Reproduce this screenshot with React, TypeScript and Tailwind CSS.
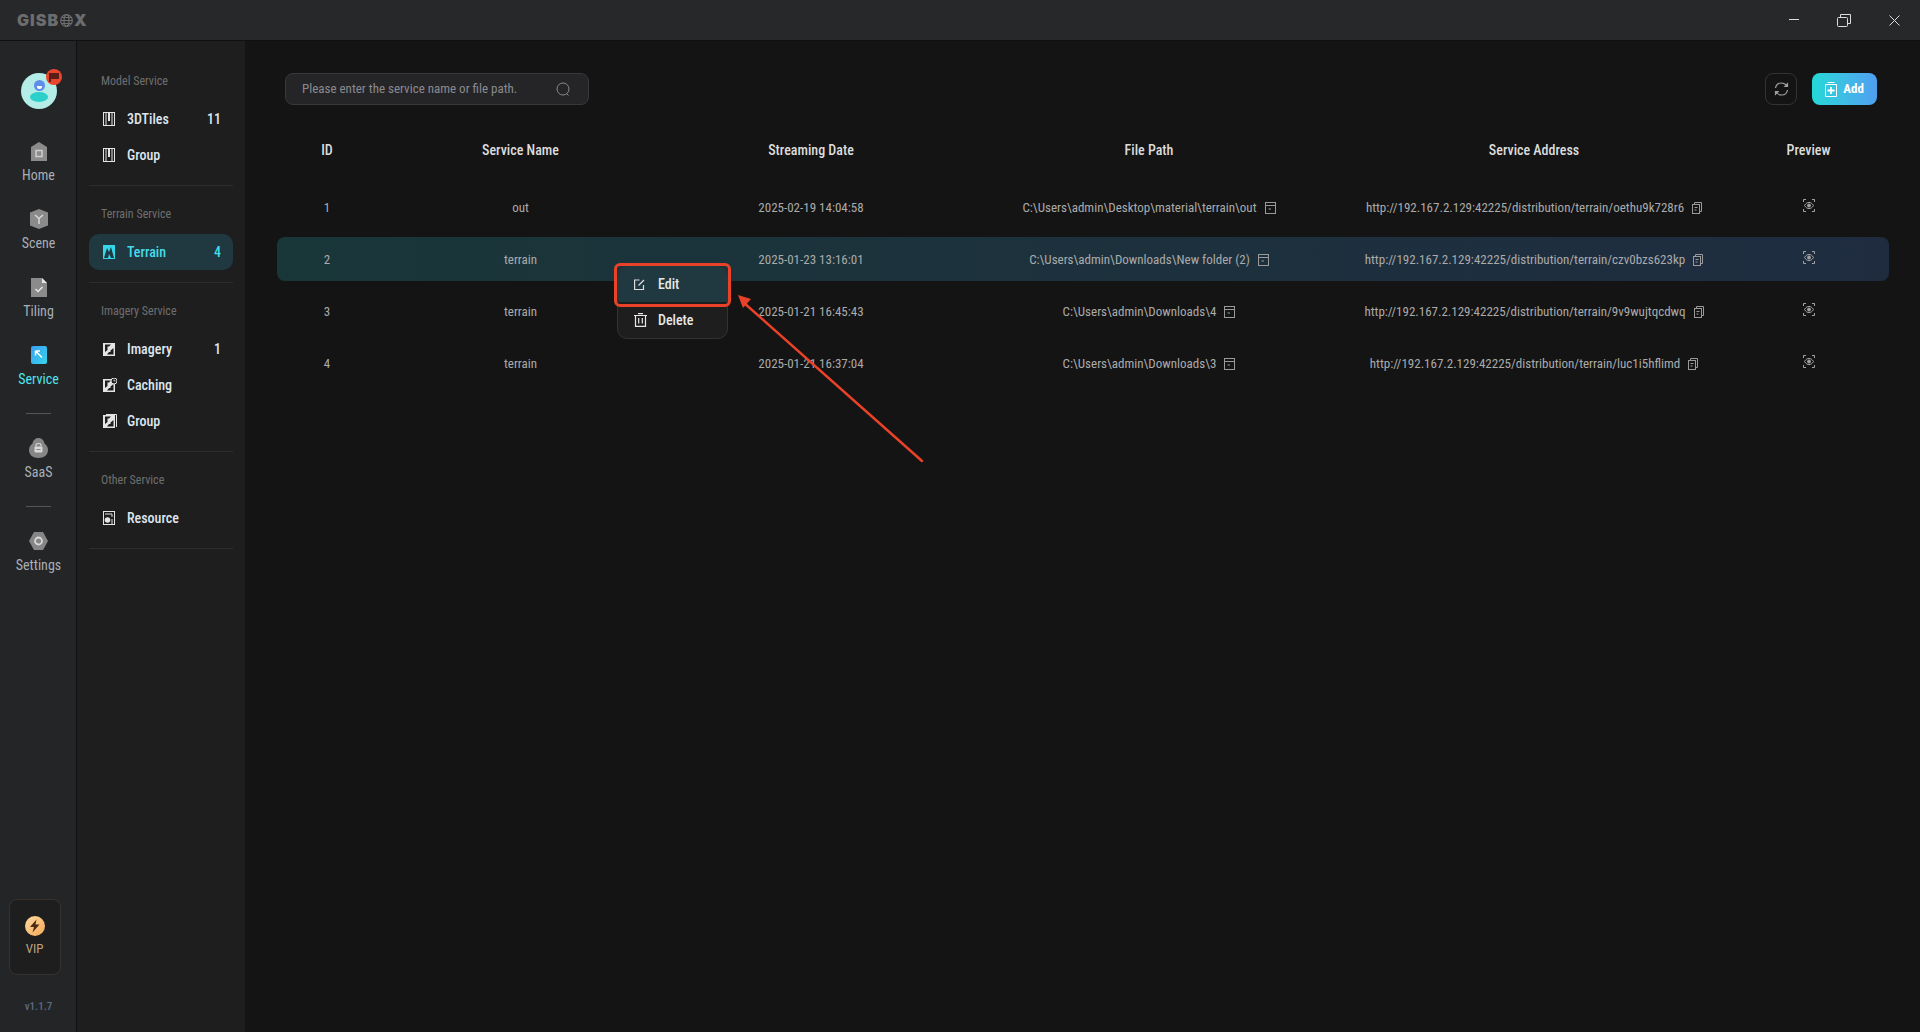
import React from "react";

const rows = [
  { id: 1, name: "out", date: "2025-02-19 14:04:58", path: "C:\\Users\\admin\\Desktop\\material\\terrain\\out", url: "http://192.167.2.129:42225/distribution/terrain/oethu9k728r6" },
  { id: 2, name: "terrain", date: "2025-01-23 13:16:01", path: "C:\\Users\\admin\\Downloads\\New folder (2)", url: "http://192.167.2.129:42225/distribution/terrain/czv0bzs623kp" },
  { id: 3, name: "terrain", date: "2025-01-21 16:45:43", path: "C:\\Users\\admin\\Downloads\\4", url: "http://192.167.2.129:42225/distribution/terrain/9v9wujtqcdwq" },
  { id: 4, name: "terrain", date: "2025-01-21 16:37:04", path: "C:\\Users\\admin\\Downloads\\3", url: "http://192.167.2.129:42225/distribution/terrain/luc1i5hflimd" },
];

const GRID = "grid grid-cols-[100px_287px_294px_382px_388px_161px] items-center h-11";

function FileIcon() {
  return (
    <svg width="11" height="12" viewBox="0 0 11 12" fill="none" stroke="#9a9a9a" strokeWidth="1" className="shrink-0">
      <rect x="0.5" y="0.5" width="10" height="11" />
      <path d="M0.5 3.5H10.5M3.5 7H6" />
    </svg>
  );
}
function CopyIcon() {
  return (
    <svg width="10" height="12" viewBox="0 0 10 12" fill="none" stroke="#9a9a9a" strokeWidth="1" className="shrink-0">
      <rect x="0.5" y="2.5" width="7" height="9" />
      <path d="M2.5 2.5V0.5H9.5V9.5H7.5M2.5 5.5H5.5M2.5 8H4.5" />
    </svg>
  );
}
function PreviewIcon() {
  return (
    <svg width="12" height="13" viewBox="0 0 12 13" fill="none" stroke="#a3a3a3" strokeWidth="1" className="mb-1">
      <path d="M0.5 3V0.5H3M9 0.5H11.5V3M0.5 10V12.5H3M9 12.5H11.5V10" />
      <path d="M1.5 6.5C3 4 4.5 3.5 6 3.5S9 4 10.5 6.5C9 9 7.500 9.500 6 9.500S3 9 1.5 6.500Z" />
      <circle cx="6" cy="6.500" r="1.500" fill="#a3a3a3" />
    </svg>
  );
}

function RailItem({ icon, label, active }: { icon: React.ReactNode; label: string; active?: boolean }) {
  return (
    <div className="flex flex-col items-center gap-1 w-full">
      <div className="h-5 flex items-center justify-center">{icon}</div>
      <div className={"h-5 leading-5 text-[14px] " + (active ? "text-[#4fe3ee]" : "text-[#a9afb6]")}>{label}</div>
    </div>
  );
}

const Home = (
  <svg width="16" height="19" viewBox="0 0 16 19">
    <path d="M8 0L16 5V19H0V5Z" fill="#8b8b8b" />
    <rect x="5" y="8.500" width="6" height="6" fill="none" stroke="#d0d0d0" strokeWidth="1.500" />
  </svg>
);
const Scene = (
  <svg width="18" height="20" viewBox="0 0 18 20">
    <path d="M9 0L18 3.500V16.500L9 20L0 16.500V3.500Z" fill="#8b8b8b" />
    <path d="M5 6L9 9.500L13 6M9 9.500V15" fill="none" stroke="#d8d8d8" strokeWidth="1.500" />
  </svg>
);
const Tiling = (
  <svg width="16" height="19" viewBox="0 0 16 19">
    <path d="M0 0H11L16 5V19H0Z" fill="#8b8b8b" />
    <path d="M11 0L16 5H11Z" fill="#e8e8e8" />
    <path d="M4.500 11L7 13.500L11.500 9" fill="none" stroke="#e8e8e8" strokeWidth="1.500" />
  </svg>
);
const ServiceIc = (
  <svg width="16" height="18" viewBox="0 0 16 18">
    <defs>
      <linearGradient id="svc" x1="0" y1="0" x2="1" y2="1">
        <stop offset="0" stopColor="#3b9df5" />
        <stop offset="1" stopColor="#35d6ea" />
      </linearGradient>
    </defs>
    <rect width="16" height="18" rx="2" fill="url(#svc)" />
    <path d="M4.500 5H9M4.500 5V9.500M4.500 5L11 11.500" fill="none" stroke="#fff" strokeWidth="1.500" />
  </svg>
);
const Saas = (
  <svg width="19" height="20" viewBox="0 0 19 20">
    <path d="M9.500 0C13 0 15 2.500 15.500 5.500C17.500 7 19 9 19 12C19 17 15 20 9.500 20S0 17 0 12C0 9 1.500 7 3.500 5.500C4 2.500 6 0 9.500 0Z" fill="#868686" />
    <rect x="5.500" y="8.500" width="8" height="6" rx="1" fill="#d8d8d8" />
    <path d="M7 8.500V7C7 5 12 5 12 7V8.500" fill="none" stroke="#d8d8d8" strokeWidth="1.200" />
    <path d="M7.500 11.500H11.500" stroke="#868686" strokeWidth="1" />
  </svg>
);
const Settings = (
  <svg width="19" height="18" viewBox="0 0 19 18">
    <path d="M5 0H14L19 9L14 18H5L0 9Z" fill="#868686" />
    <circle cx="9.500" cy="9" r="3.500" fill="none" stroke="#d8d8d8" strokeWidth="1.800" />
  </svg>
);

function SubIcon({ kind, color = "#e5e5e5" }: { kind: string; color?: string }) {
  if (kind === "tiles")
    return (
      <svg width="12" height="14" viewBox="0 0 12 14" className="shrink-0">
        <rect x="0.500" y="0.500" width="11" height="13" fill="none" stroke={color} />
        <path d="M3 1V13M9 1V13" stroke={color} strokeWidth="1" />
        <rect x="5" y="1" width="2" height="8" fill={color} />
      </svg>
    );
  if (kind === "terrain")
    return (
      <svg width="12" height="14" viewBox="0 0 12 14" className="shrink-0">
        <rect width="12" height="14" fill="#35d6ea" />
        <path d="M1 13L4 3L6 7L8 2L11 13Z" fill="#1c3a42" />
        <path d="M5 13L6 9L8 13Z" fill="#35d6ea" />
      </svg>
    );
  if (kind === "resource")
    return (
      <svg width="12" height="14" viewBox="0 0 12 14" className="shrink-0">
        <rect x="0.500" y="0.500" width="11" height="13" fill="none" stroke={color} />
        <circle cx="4.500" cy="9" r="2.800" fill={color} />
        <path d="M2 3H9V6M9 8V13" stroke={color} fill="none" />
      </svg>
    );
  return (
    <svg width="14" height="14" viewBox="0 0 14 14" className="shrink-0 -mr-0.5">
      <rect x="0" y="1" width="12" height="13" fill={color} />
      <path d="M2 2.500H8L6 4.500H4.500V8L2 10Z" fill="#1e1e1e" />
      <path d="M4 12.500H10.500V6L7.500 8.500V10H6Z" fill="#1e1e1e" />
      {kind === "cache" && (
        <>
          <circle cx="11" cy="3" r="3" fill="#1e1e1e" stroke={color} />
          <path d="M11 1.500V3H12.500" stroke={color} fill="none" strokeWidth="0.800" />
        </>
      )}
      {kind === "group" && <path d="M3 0.500H13.500V13" fill="none" stroke={color} />}
    </svg>
  );
}

function SubItem({ kind, label, count, active }: { kind: string; label: string; count?: string; active?: boolean }) {
  return (
    <div className={"h-9 flex items-center pl-[14px] pr-3 rounded-[10px] " + (active ? "bg-[#203840] text-[#45dcea]" : "text-[#dfe6ee]")}>
      <div className="w-[24px] flex items-center">
        <SubIcon kind={kind} />
      </div>
      <span className="flex-1 text-[14px] font-medium">{label}</span>
      {count && <span className="text-[14px] font-medium">{count}</span>}
    </div>
  );
}

function SubSection({ title, first, children }: { title: string; first?: boolean; children: React.ReactNode }) {
  return (
    <div className={"border-b border-[#2d2d2d] pb-3 " + (first ? "pt-8" : "pt-[20px]")}>
      <div className="h-4 leading-4 text-[12px] text-[#6f6f6f] pl-3 mb-3">{title}</div>
      {children}
    </div>
  );
}

export default function App() {
  return (
    <div className="relative w-[1920px] h-[1032px] overflow-hidden flex flex-col bg-[#141414] [font-family:Roboto,sans-serif] [font-stretch:85%] text-[13px]">
      {/* Title bar */}
      <header className="h-[41px] shrink-0 bg-[#27282a] border-b border-[#101010] flex items-center pl-[17px]">
        <div className="flex items-center text-[#6d6d6d] [font-family:Inter,sans-serif] font-black text-[16px] tracking-[1px] leading-none">
          <span>GIS</span>
          <span>B</span>
          <svg width="13" height="13" viewBox="0 0 13 13" fill="none" stroke="#6d6d6d" strokeWidth="1.200" className="mx-px">
            <circle cx="6.500" cy="6.500" r="5.800" />
            <ellipse cx="6.500" cy="6.500" rx="2.500" ry="5.800" />
            <path d="M1 6.500H12M1.800 3.500H11.200M1.800 9.500H11.200" />
          </svg>
          <span>X</span>
        </div>
        <div className="ml-auto flex items-center">
          <svg width="10" height="2" viewBox="0 0 10 2" className="mr-[38px]">
            <rect width="10" height="1" fill="#dcdcdc" />
          </svg>
          <svg width="14" height="13" viewBox="0 0 14 13" fill="none" stroke="#dcdcdc" strokeWidth="1" className="mr-[38px]">
            <rect x="0.500" y="3.500" width="10" height="9" rx="1" />
            <path d="M3.500 3.500V0.500H13.500V9.500H10.500" />
          </svg>
          <svg width="11" height="11" viewBox="0 0 11 11" fill="none" stroke="#dcdcdc" strokeWidth="1" className="mr-[20px]">
            <path d="M0.500 0.500L10.500 10.500M10.500 0.500L0.500 10.500" />
          </svg>
        </div>
      </header>

      <div className="flex-1 flex min-h-0">
        {/* Rail */}
        <aside className="w-[77px] shrink-0 bg-[#242527] border-r border-[#101010] flex flex-col items-center pt-8 pl-px">
          <div className="relative w-9 h-9 rounded-full bg-[#b4ece8] mb-8">
            <div className="absolute left-[13px] top-[7px] w-[11px] h-[11px] rounded-full bg-[#5f8de8] overflow-hidden">
              <div className="absolute left-[3px] top-[6px] w-[5px] h-[3px] rounded-b-full bg-white" />
            </div>
            <div className="absolute left-[9px] top-[19px] w-[18px] h-[10px] rounded-[50%] bg-[#2ccfca]" />
            <div className="absolute -right-[5px] -top-[4px] w-4 h-4 rounded-full bg-[#e8452c] flex items-center justify-center">
              <svg width="10" height="9" viewBox="0 0 10 9">
                <path d="M0 0H10V6H2V9H0Z" fill="#5a1e18" />
              </svg>
            </div>
          </div>
          <div className="flex flex-col gap-6 w-full">
            <RailItem icon={Home} label="Home" />
            <RailItem icon={Scene} label="Scene" />
            <RailItem icon={Tiling} label="Tiling" />
            <RailItem icon={ServiceIc} label="Service" active />
            <div className="mx-auto w-[25px] h-px bg-[#55565a]" />
            <RailItem icon={Saas} label="SaaS" />
            <div className="mx-auto w-[25px] h-px bg-[#55565a]" />
            <RailItem icon={Settings} label="Settings" />
          </div>
          <div className="mt-auto w-[52px] h-[76px] mr-[8px] rounded-lg border border-[#38322c] bg-[#1e1e1e] flex flex-col items-center pt-[16px]">
            <svg width="20" height="20" viewBox="0 0 20 20">
              <defs>
                <linearGradient id="vip" x1="0" y1="0" x2="1" y2="1">
                  <stop offset="0" stopColor="#ffd9a0" />
                  <stop offset="1" stopColor="#f5a95a" />
                </linearGradient>
              </defs>
              <circle cx="10" cy="10" r="10" fill="url(#vip)" />
              <path d="M11.500 3.500L5 11H9L7.500 16.500L14.500 8.500H10.500Z" fill="#4a2a10" />
            </svg>
            <div className="mt-[3px] text-[13px] text-[#bfa27f]">VIP</div>
          </div>
          <div className="mt-6 mb-[17px] h-4 leading-4 text-[11px] font-medium text-[#5d6b80]">v1.1.7</div>
        </aside>

        {/* Sub sidebar */}
        <nav className="w-[168px] shrink-0 bg-[#1e1e1e] px-3">
          <SubSection title="Model Service" first>
            <SubItem kind="tiles" label="3DTiles" count="11" />
            <SubItem kind="tiles" label="Group" />
          </SubSection>
          <SubSection title="Terrain Service">
            <SubItem kind="terrain" label="Terrain" count="4" active />
          </SubSection>
          <SubSection title="Imagery Service">
            <SubItem kind="img" label="Imagery" count="1" />
            <SubItem kind="cache" label="Caching" />
            <SubItem kind="group" label="Group" />
          </SubSection>
          <SubSection title="Other Service">
            <SubItem kind="resource" label="Resource" />
          </SubSection>
        </nav>

        {/* Main */}
        <main className="flex-1 min-w-0 pl-8 pt-8 pr-[31px]">
          <div className="flex items-center pl-2 pr-[12px] mb-6">
            <div className="w-[304px] h-8 rounded-lg border border-[#38383a] bg-[#252528] flex items-center pl-[16px] pr-[18px]">
              <span className="flex-1 text-[13px] text-[#8a8a8e] whitespace-nowrap">Please enter the service name or file path.</span>
              <svg width="14" height="14" viewBox="0 0 14 14" fill="none" stroke="#8a8a8e" strokeWidth="1">
                <circle cx="7" cy="7" r="6" />
                <path d="M10.500 11.500L12.500 13.500" />
              </svg>
            </div>
            <button className="ml-auto w-8 h-8 rounded-lg border border-[#333] flex items-center justify-center">
              <svg width="15" height="14" viewBox="0 0 15 14" fill="none" stroke="#a0a0a0" strokeWidth="1.200">
                <path d="M1.500 6C2 3 4.500 1 7.500 1C9.800 1 11.500 2 13 4" />
                <path d="M13.500 8C13 11 10.500 13 7.500 13C5.200 13 3.500 12 2 10" />
                <path d="M13.500 1.800V4.500H11ZM1.500 12.200V9.500H4Z" fill="#a0a0a0" />
              </svg>
            </button>
            <button className="ml-[15px] w-[65px] h-8 rounded-lg bg-gradient-to-r from-[#22d8d8] to-[#4f9ff0] flex items-center justify-center gap-[6px] text-white text-[13px] font-bold">
              <svg width="12" height="15" viewBox="0 0 12 15" fill="none" stroke="#fff" strokeWidth="1">
                <path d="M2.500 0.500H9.500M0.500 2.500H11.500V14.500H0.500Z" />
                <path d="M6 5V12M2.500 8.500H9.500" strokeWidth="1.800" />
              </svg>
              Add
            </button>
          </div>

          <div className={GRID + " mb-3 text-[14px] font-medium text-[#dcdcdc] text-center pb-px"}>
            <div>ID</div>
            <div>Service Name</div>
            <div>Streaming Date</div>
            <div>File Path</div>
            <div>Service Address</div>
            <div>Preview</div>
          </div>

          <div className="flex flex-col gap-2">
            {rows.map((r) => (
              <div
                key={r.id}
                className={GRID + " rounded-lg text-[#ababab] text-center pt-px " + (r.id === 2 ? "bg-gradient-to-r from-[#193639] to-[#1f2c40]" : "")}
              >
                <div>{r.id}</div>
                <div>{r.name}</div>
                <div>{r.date}</div>
                <div className="flex items-center justify-center gap-2 whitespace-nowrap">
                  <span>{r.path}</span>
                  <FileIcon />
                </div>
                <div className="flex items-center justify-center gap-2 whitespace-nowrap">
                  <span>{r.url}</span>
                  <CopyIcon />
                </div>
                <div className="flex items-center justify-center">
                  <PreviewIcon />
                </div>
              </div>
            ))}
          </div>
        </main>
      </div>

      {/* Context menu */}
      <div className="absolute left-[617px] top-[265px] w-[111px] h-[74px] rounded-[10px] border border-[#333335] bg-[#1e1e1e] overflow-hidden text-[14px] font-medium text-[#e8e8e8]">
        <div className="h-9 bg-[#203840] flex items-center pl-4">
          <svg width="11" height="11" viewBox="0 0 11 11" fill="none" stroke="#dcdcdc" strokeWidth="1.200" className="mr-[13px]">
            <path d="M9.500 6V10.500H0.600V1H5.500" />
            <path d="M4.500 6.500L10 1" />
          </svg>
          Edit
        </div>
        <div className="h-9 flex items-center pl-4">
          <svg width="13" height="14" viewBox="0 0 13 14" fill="none" stroke="#e8e8e8" strokeWidth="1.200" className="mr-[11px]">
            <path d="M0 2.500H13M4 0.600H9M1.500 2.500V13.400H11.500V2.500M4.700 5V10.500M8.300 5V10.500" />
          </svg>
          Delete
        </div>
      </div>

      {/* Annotation */}
      <div className="absolute left-[614px] top-[263px] w-[117px] h-[44px] rounded-[6px] border-[3px] border-[#ea4228]" />
      <svg className="absolute left-0 top-0 pointer-events-none" width="1920" height="1032">
        <path d="M922 461L743 302" stroke="#ea4228" strokeWidth="2.500" strokeLinecap="round" fill="none" />
        <path d="M738 295L751 299L743 308Z" fill="#ea4228" />
      </svg>
    </div>
  );
}
